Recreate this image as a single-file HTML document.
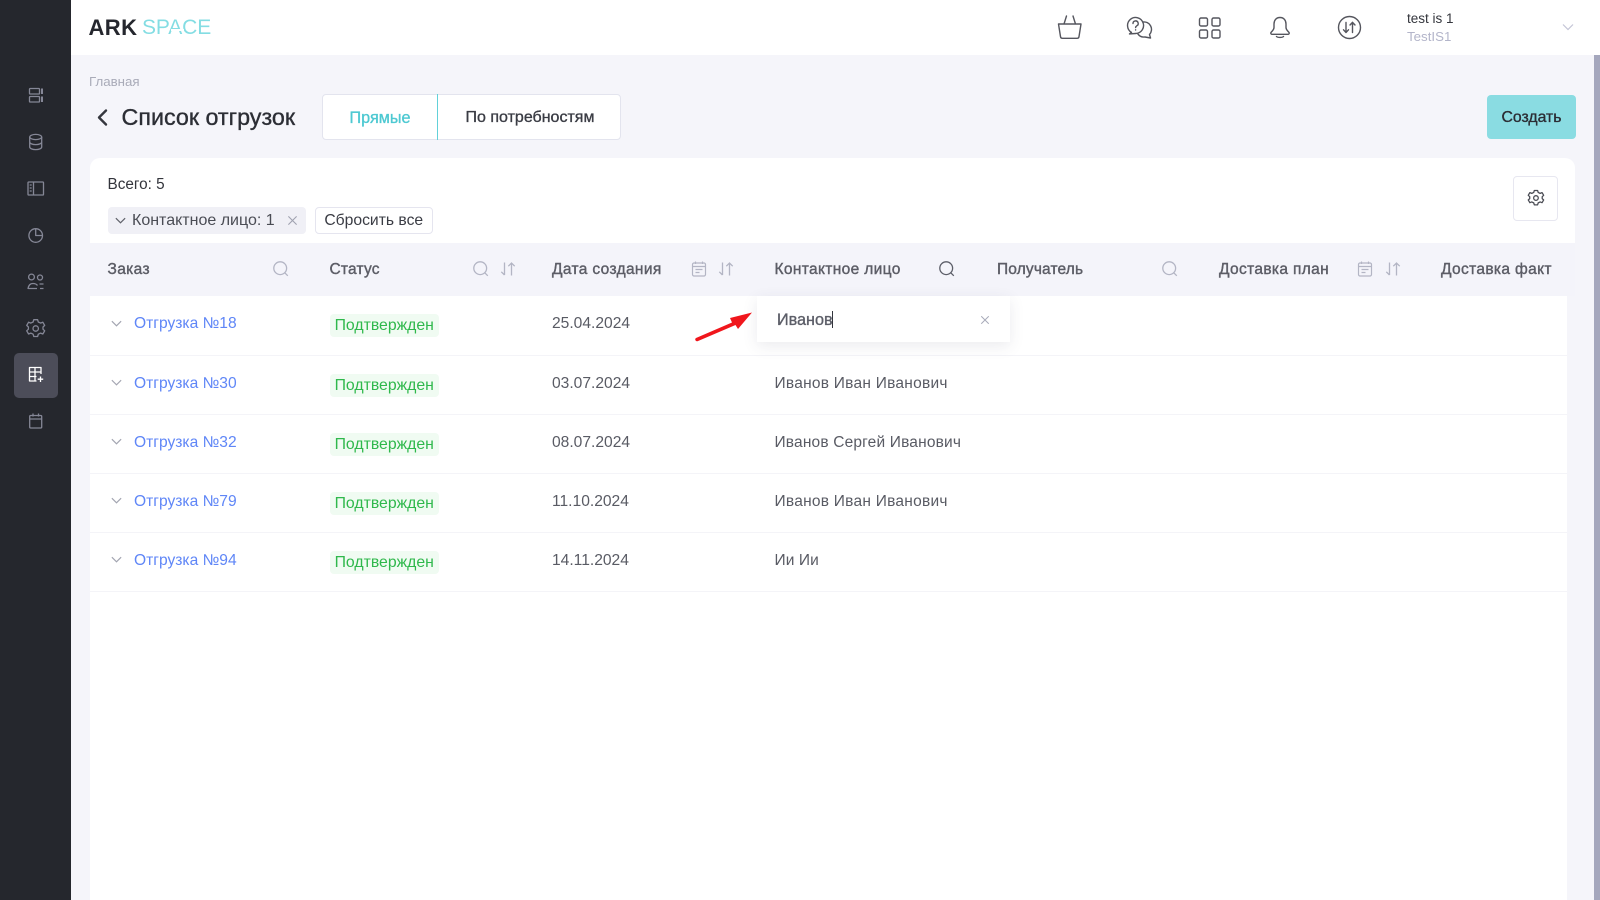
<!DOCTYPE html>
<html lang="ru"><head><meta charset="utf-8"><title>Список отгрузок</title>
<style>
html,body{margin:0;padding:0;width:1600px;height:900px;overflow:hidden;background:#f5f5fa}
body{font-family:"Liberation Sans",sans-serif;font-size:15.5px;color:#595b64;position:relative}
.a{position:absolute;white-space:nowrap}
.t{position:absolute;white-space:nowrap;line-height:20px;height:20px}
.m{-webkit-text-stroke:.35px currentColor}
.n{letter-spacing:.25px}
svg{position:absolute;overflow:visible;fill:none}
.th{color:#5c5d66;-webkit-text-stroke:.4px #5c5d66;top:260px;font-size:15.5px;letter-spacing:.35px}
.link{color:#5f86f7;font-size:15.6px}
.st{position:absolute;left:329.5px;width:109.5px;height:23px;line-height:23px;background:#f0fbf2;border-radius:4px;color:#2fb84c;text-align:center;font-size:15.8px}
.line{position:absolute;left:90px;width:1477px;height:1px;background:#f4f4f8}
</style></head><body>
<svg width="0" height="0" style="position:absolute"><defs>
<symbol id="s" viewBox="0 0 18 18"><circle cx="8.2" cy="8.2" r="6.4"/><path d="M12.8 12.8l3 3"/></symbol>
<symbol id="so" viewBox="0 0 18 18"><path d="M5.5 2.5v12.5M2.3 11.8l3.2 3.2M12.5 15.5V3M9.3 6.200l3.200-3.200 3.200 3.200"/></symbol>
<symbol id="c" viewBox="0 0 18 18"><rect x="2.500" y="3" width="13" height="13" rx="1.500"/><path d="M2.500 6.500h13M5.500 1.500v2.500M12.500 1.500v2.500M5.500 9.500h7M5.500 12.500h4"/></symbol>
<symbol id="d" viewBox="0 0 14 14"><path d="M2 4.500l5 5 5-5"/></symbol>
<symbol id="x" viewBox="0 0 12 12"><path d="M1.500 1.500l9 9M10.500 1.500l-9 9"/></symbol>
</defs></svg>

<!-- sidebar -->
<div class="a" style="left:0;top:0;width:71px;height:900px;background:#25272d"></div>
<div class="a" style="left:13.500px;top:353px;width:44.500px;height:44.500px;background:#4c4d59;border-radius:5px"></div>
<svg style="left:0;top:0" width="72" height="440" stroke="#858796" stroke-width="1.300" stroke-linejoin="round">
<rect x="29.500" y="88.500" width="10" height="5.500" rx=".8"/><rect x="29.500" y="96.500" width="10" height="5.500" rx=".8"/><path d="M42 88.500v5.500M42 96.500v5.500" stroke-width="2"/>
<ellipse cx="35.700" cy="137" rx="6" ry="2.600"/><path d="M29.700 137v10c0 1.500 2.700 2.600 6 2.600s6-1.100 6-2.600v-10M29.700 142c0 1.500 2.700 2.600 6 2.600s6-1.100 6-2.600"/>
<rect x="28" y="182" width="15.500" height="13" rx=".8"/><path d="M33.500 182v13M29.700 185h2M29.700 188h2M29.700 191h2"/>
<circle cx="35.700" cy="235.500" r="6.800"/><path d="M35.700 228.700v6.800h6.800"/>
<circle cx="31.500" cy="277" r="2.900"/><circle cx="40" cy="277.500" r="2.500"/><path d="M28 289c.5-4 2.500-5.500 5-5.500 2 0 3.500.6 4.500 2M28 288.500h9M39.500 284h4M40 288.500h3.500"/>
<path d="M33.800 321.200h3.800l.7 2.300 2.300 1.100 2.200-.9 1.900 3.200-1.700 1.600v2.200l1.700 1.600-1.900 3.200-2.200-.9-2.300 1.100-.7 2.300h-3.800l-.7-2.300-2.300-1.100-2.200.9-1.900-3.200 1.700-1.600v-2.200l-1.700-1.600 1.900-3.200 2.200.9 2.300-1.100z" transform="translate(0 -1.500)"/><circle cx="35.700" cy="328.500" r="2.700"/>
<rect x="29.700" y="415.500" width="12" height="12.500" rx="1"/><path d="M29.700 419h12M33 413.500v3M38.500 413.500v3"/>
<g stroke="#fff"><path d="M41 374v-6.500H29.500V381h7M29.500 372h11.500M29.500 376.500h7M35 367.500V381"/><path d="M40.500 376.500v5.500M37.700 379.200h5.500"/></g>
</svg>

<!-- header -->
<div class="a" style="left:71px;top:0;width:1529px;height:55px;background:#fff"></div>
<div class="a" style="left:88.500px;top:14.500px;font-size:22px;line-height:26px;font-weight:700;color:#25272e;letter-spacing:.4px">ARK</div>
<div class="a" style="left:142px;top:14.500px;font-size:21px;line-height:26px;color:#84dde3;letter-spacing:-.1px">SPACE</div>
<div class="a" style="left:171px;top:28.500px;width:13px;height:2.500px;background:#fff"></div>

<svg style="left:1040px;top:0" width="330" height="55" stroke="#55565e" stroke-width="1.400" stroke-linejoin="round" stroke-linecap="round">
<path d="M18.500 24h22.500l-2 12.600a2 2 0 0 1-2 1.700H22.500a2 2 0 0 1-2-1.700zM24 24l2.500-8M35.500 24l-2.500-8"/>
<path d="M91.500 32.400A8 8 0 1 1 95.500 33.500L89.500 33.900Z"/>
<path d="M102.800 22A7.500 7.500 0 0 1 109.500 34.500L110.500 38L105 37A7.500 7.500 0 0 1 97.800 33.800"/>
<path d="M93 23.500a2.600 2.600 0 1 1 3.800 2.300c-.9.600-1.200 1-1.200 1.800M95.600 29.800v.2"/>
<rect x="159.500" y="18" width="8" height="8" rx="1.500"/><rect x="172" y="18" width="8" height="8" rx="1.500"/><rect x="159.500" y="30" width="8" height="8" rx="1.500"/><rect x="172" y="30" width="8" height="8" rx="1.500"/>
<path d="M240 17.500c-4 0-6 3-6 6.500v3.500c0 2.500-2 3.500-3 5-.6 1 .2 1.800 1.200 1.800h15.600c1 0 1.800-.8 1.200-1.800-1-1.500-3-2.500-3-5V24c0-3.500-2-6.500-6-6.500zM236.500 36.500c1 1.300 6 1.300 7 0"/>
<circle cx="309.500" cy="27.500" r="11"/><path d="M306 22.500v10M303.500 29.800l2.500 2.700 2.500-2.700M312.500 32.500v-10M310 25l2.500-2.700 2.500 2.700"/>
</svg>
<div class="t" style="left:1407px;top:8.500px;font-size:13.500px;color:#34363d">test is 1</div>
<div class="t" style="left:1407px;top:26.500px;font-size:13.300px;color:#b3b5ca">TestIS1</div>
<svg style="left:1561px;top:20px" width="14" height="14" stroke="#c3c5d6" stroke-width="1.200"><use href="#d"/></svg>

<!-- scrollbar -->
<div class="a" style="left:1594px;top:55px;width:6px;height:845px;background:#a5a7bd"></div>

<!-- heading -->
<div class="t" style="left:89px;top:71.500px;font-size:13.300px;color:#a9abb8">Главная</div>
<svg style="left:96px;top:108px" width="14" height="20" stroke="#35373e" stroke-width="2.400" stroke-linecap="round" stroke-linejoin="round"><path d="M10 2.500L3 9.500l7 7"/></svg>
<div class="a m" style="left:121.500px;top:103px;font-size:23.300px;line-height:28px;color:#2c2e35">Список отгрузок</div>

<div class="a" style="left:322px;top:94px;width:298.500px;height:46px;background:#fff;border:1px solid #e3e4ee;border-radius:4px;box-sizing:border-box"></div>
<div class="a" style="left:436.500px;top:94px;width:1px;height:46px;background:#62d1d9"></div>
<div class="t m" style="left:322.500px;width:115px;text-align:center;top:107.500px;font-size:16.200px;color:#4ec9d2">Прямые</div>
<div class="t m" style="left:438.500px;width:183px;text-align:center;top:107.500px;font-size:16px;color:#3a3c44">По потребностям</div>

<div class="a" style="left:1487px;top:95px;width:89px;height:44px;background:#8adce2;border-radius:4px"></div>
<div class="t m" style="left:1487px;width:89px;text-align:center;top:107.500px;font-size:15.800px;color:#2b2d34">Создать</div>

<!-- card -->
<div class="a" style="left:90px;top:158px;width:1485px;height:760px;background:#fff;border-radius:10px 10px 0 0"></div>
<div class="t" style="left:107.500px;top:175px;font-size:15.300px;color:#33353c">Всего: 5</div>

<div class="a" style="left:107.500px;top:207px;width:198.500px;height:26.500px;background:#f0f0f6;border-radius:4px"></div>
<svg style="left:114px;top:214px" width="13" height="13" stroke="#60626a" stroke-width="1.300"><use href="#d"/></svg>
<div class="t" style="left:132px;top:210.500px;font-size:16px;color:#4a4c54">Контактное лицо: 1</div>
<svg style="left:287px;top:215px" width="11" height="11" stroke="#a0a2b0" stroke-width="1.200"><use href="#x"/></svg>
<div class="a" style="left:315px;top:207px;width:117.500px;height:26.500px;background:#fff;border:1px solid #e5e5ef;border-radius:4px;box-sizing:border-box"></div>
<div class="t" style="left:315px;width:117.500px;text-align:center;top:210.500px;font-size:15.700px;color:#3a3c44">Сбросить все</div>

<div class="a" style="left:1512.500px;top:175.500px;width:45px;height:45px;background:#fff;border:1px solid #e7e7f0;border-radius:4px;box-sizing:border-box"></div>
<svg style="left:1526.500px;top:189px" width="18" height="18" viewBox="26 318 19.500 21" stroke="#4a4c54" stroke-width="1.500" stroke-linejoin="round"><path d="M33.800 319.700h3.800l.7 2.300 2.300 1.100 2.200-.9 1.900 3.200-1.700 1.600v2.200l1.700 1.600-1.900 3.200-2.200-.9-2.300 1.100-.7 2.300h-3.800l-.7-2.300-2.300-1.100-2.200.9-1.900-3.200 1.700-1.600v-2.200l-1.700-1.600 1.900-3.200 2.200.9 2.300-1.100z"/><circle cx="35.700" cy="328.500" r="2.700"/></svg>

<!-- table head -->
<div class="a" style="left:90px;top:242.500px;width:1485px;height:53.500px;background:#f4f4fa"></div>
<div class="t th" style="left:107.500px">Заказ</div>
<div class="t th" style="left:329.500px;letter-spacing:.2px">Статус</div>
<div class="t th" style="left:552px">Дата создания</div>
<div class="t th" style="left:774.500px">Контактное лицо</div>
<div class="t th" style="left:997px;letter-spacing:.15px">Получатель</div>
<div class="t th" style="left:1219px">Доставка план</div>
<div class="t th" style="left:1441px">Доставка факт</div>

<svg style="left:272px;top:260px" width="18" height="18" stroke="#b3b5c4" stroke-width="1.300"><use href="#s"/></svg>
<svg style="left:472px;top:260px" width="18" height="18" stroke="#b3b5c4" stroke-width="1.300"><use href="#s"/></svg>
<svg style="left:499px;top:260px" width="18" height="18" stroke="#b3b5c4" stroke-width="1.300"><use href="#so"/></svg>
<svg style="left:690px;top:260px" width="18" height="18" stroke="#b3b5c4" stroke-width="1.200"><use href="#c"/></svg>
<svg style="left:716.500px;top:260px" width="18" height="18" stroke="#b3b5c4" stroke-width="1.300"><use href="#so"/></svg>
<svg style="left:938px;top:260px" width="18" height="18" stroke="#5c5e68" stroke-width="1.300"><use href="#s"/></svg>
<svg style="left:1161px;top:260px" width="18" height="18" stroke="#b3b5c4" stroke-width="1.300"><use href="#s"/></svg>
<svg style="left:1356px;top:260px" width="18" height="18" stroke="#b3b5c4" stroke-width="1.200"><use href="#c"/></svg>
<svg style="left:1384px;top:260px" width="18" height="18" stroke="#b3b5c4" stroke-width="1.300"><use href="#so"/></svg>

<!-- rows -->
<div class="a" style="left:1567px;top:296px;width:8px;height:604px;background:#f5f5fa"></div>
<div class="line" style="top:355px"></div><div class="line" style="top:414px"></div><div class="line" style="top:473px"></div><div class="line" style="top:532px"></div><div class="line" style="top:591px"></div>

<svg style="left:109.500px;top:316.500px" width="13" height="13" stroke="#a2a4b0" stroke-width="1.200"><use href="#d"/></svg>
<div class="t link" style="left:134px;top:313.500px">Отгрузка №18</div>
<div class="st" style="top:313.500px">Подтвержден</div>
<div class="t" style="left:552px;top:313.500px;font-size:15.600px">25.04.2024</div>

<svg style="left:109.500px;top:375.500px" width="13" height="13" stroke="#a2a4b0" stroke-width="1.200"><use href="#d"/></svg>
<div class="t link" style="left:134px;top:373.500px">Отгрузка №30</div>
<div class="st" style="top:373.500px">Подтвержден</div>
<div class="t" style="left:552px;top:373.500px;font-size:15.600px">03.07.2024</div>
<div class="t n" style="left:774.500px;top:373.500px">Иванов Иван Иванович</div>

<svg style="left:109.500px;top:435px" width="13" height="13" stroke="#a2a4b0" stroke-width="1.200"><use href="#d"/></svg>
<div class="t link" style="left:134px;top:432.500px">Отгрузка №32</div>
<div class="st" style="top:432.800px">Подтвержден</div>
<div class="t" style="left:552px;top:432.500px;font-size:15.600px">08.07.2024</div>
<div class="t n" style="left:774.500px;top:432.500px;letter-spacing:.17px">Иванов Сергей Иванович</div>

<svg style="left:109.500px;top:494px" width="13" height="13" stroke="#a2a4b0" stroke-width="1.200"><use href="#d"/></svg>
<div class="t link" style="left:134px;top:491.800px">Отгрузка №79</div>
<div class="st" style="top:491.500px">Подтвержден</div>
<div class="t" style="left:552px;top:491.800px;font-size:15.600px">11.10.2024</div>
<div class="t n" style="left:774.500px;top:491.800px">Иванов Иван Иванович</div>

<svg style="left:109.500px;top:553px" width="13" height="13" stroke="#a2a4b0" stroke-width="1.200"><use href="#d"/></svg>
<div class="t link" style="left:134px;top:551px">Отгрузка №94</div>
<div class="st" style="top:550.800px">Подтвержден</div>
<div class="t" style="left:552px;top:551px;font-size:15.600px">14.11.2024</div>
<div class="t n" style="left:774.500px;top:551px;letter-spacing:.1px">Ии Ии</div>

<!-- popup -->
<div class="a" style="left:757px;top:296px;width:253px;height:46px;background:#fff;box-shadow:0 4px 14px rgba(60,60,90,.1)"></div>
<div class="t m" style="left:777px;top:310px;font-size:16.200px;color:#5c5e68">Иванов</div>
<div class="a" style="left:831.500px;top:311px;width:1px;height:17px;background:#33353c"></div>
<svg style="left:980px;top:315px" width="10" height="10" stroke="#a9abb9" stroke-width="1.200"><use href="#x"/></svg>

<!-- arrow -->
<svg style="left:690px;top:307px" width="70" height="36"><path d="M6 31L42 15.500l-2-4.500L62 5.500 48 22l-2.500-4L7.500 34.200a1.800 1.800 0 0 1-1.500-3.200z" fill="#f0161c"/></svg>
</body></html>
